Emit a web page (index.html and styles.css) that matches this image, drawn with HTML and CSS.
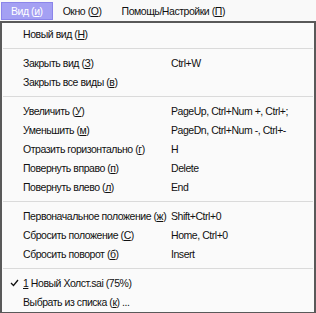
FILE: index.html
```html
<!DOCTYPE html>
<html lang="ru">
<head>
    <meta charset="UTF-8">
    <title>Вид</title>
    <link rel="stylesheet" href="styles.css">
</head>
<body>
    <div class="menubar">
        <span class="top-item active">Вид (<u>и</u>)</span>
        <span class="top-item">Окно (<u>О</u>)</span>
        <span class="top-item">Помощь/Настройки (<u>П</u>)</span>
    </div>

    <div class="popup">
        <div class="row"><span class="label">Новый вид (<u>Н</u>)</span><span class="key"></span></div>
        <div class="sep"></div>
        <div class="row"><span class="label">Закрыть вид (<u>З</u>)</span><span class="key">Ctrl+W</span></div>
        <div class="row"><span class="label">Закрыть все виды (<u>в</u>)</span><span class="key"></span></div>
        <div class="sep"></div>
        <div class="row"><span class="label">Увеличить (<u>У</u>)</span><span class="key">PageUp, Ctrl+Num +, Ctrl+;</span></div>
        <div class="row"><span class="label">Уменьшить (<u>м</u>)</span><span class="key">PageDn, Ctrl+Num -, Ctrl+-</span></div>
        <div class="row"><span class="label">Отразить горизонтально (<u>г</u>)</span><span class="key">H</span></div>
        <div class="row"><span class="label">Повернуть вправо (<u>п</u>)</span><span class="key">Delete</span></div>
        <div class="row"><span class="label">Повернуть влево (<u>л</u>)</span><span class="key">End</span></div>
        <div class="sep"></div>
        <div class="row"><span class="label">Первоначальное положение (<u>ж</u>)</span><span class="key">Shift+Ctrl+0</span></div>
        <div class="row"><span class="label">Сбросить положение (<u>С</u>)</span><span class="key">Home, Ctrl+0</span></div>
        <div class="row"><span class="label">Сбросить поворот (<u>б</u>)</span><span class="key">Insert</span></div>
        <div class="sep"></div>
        <div class="row">
            <span class="check">
                <svg width="9" height="8" viewBox="0 0 9 8"><path d="M1 4 L3.5 6.5 L8 1" fill="none" stroke="#111" stroke-width="1.3"/></svg>
            </span>
            <span class="label"><u>1</u> Новый Холст.sai (75%)</span><span class="key"></span>
        </div>
        <div class="row"><span class="label">Выбрать из списка (<u>к</u>) ...</span><span class="key"></span></div>
    </div>
</body>
</html>
```

FILE: styles.css
```css
body {
    margin: 0;
    width: 316px;
    height: 313px;
    overflow: hidden;
    background-color: #f9f9f9;
    font-family: 'Liberation Sans', Arial, sans-serif;
    font-size: 10.5px;
    letter-spacing: -0.45px;
    color: #111;
}

u {
    text-decoration: underline;
    text-underline-offset: 1px;
}

.menubar {
    height: 21px;
    display: flex;
    align-items: center;
    padding-left: 1px;
}

.top-item {
    padding: 0 10px;
    line-height: 16px;
}

.active {
    background-color: #a4a0f3;
    border: 1px solid #8b85ea;
    color: #fff;
    padding: 0 9px;
}

.popup {
    border: 2px solid #595959;
    background-color: #fafafa;
    height: 288px;
    padding-top: 1px;
}

.row {
    position: relative;
    display: flex;
    height: 19px;
    align-items: center;
    padding-left: 21px;
}

.label {
    flex-shrink: 0;
    width: 148px;
    white-space: nowrap;
}

.key {
    white-space: nowrap;
}

.check {
    position: absolute;
    left: 8px;
    top: 6px;
    display: flex;
}

.sep {
    height: 10px;
    display: flex;
    align-items: center;
    padding: 0 1px;
}

.sep::before {
    content: "";
    flex: 1;
    height: 1px;
    background-color: #dadada;
}
```
